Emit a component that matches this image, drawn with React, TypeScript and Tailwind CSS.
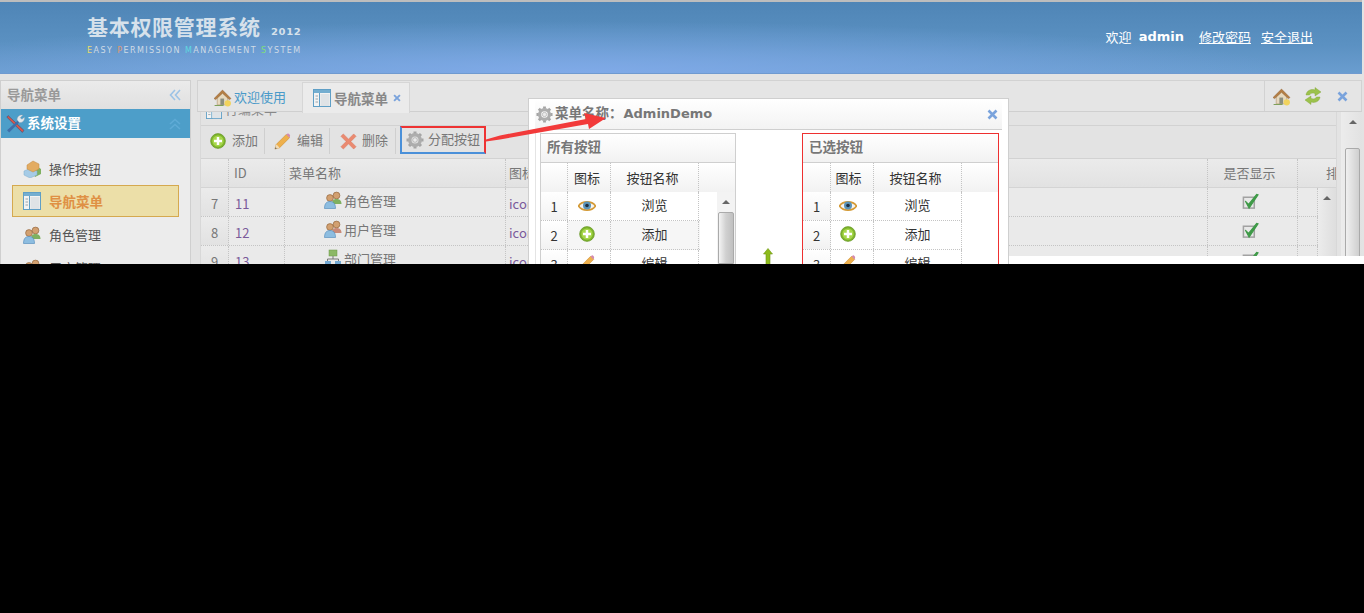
import type { ReactNode } from 'react'

const cjk = 'font-["Noto_Sans_CJK_SC","Liberation_Sans",sans-serif]'

const Svg = ({ className, children }: { className: string; children: ReactNode }) => (
  <svg viewBox="0 0 18 18" className={`shrink-0 ${className}`}>
    {children}
  </svg>
)

const HomeIcon = ({ className = 'w-[19px] h-[19px]' }: { className?: string }) => (
  <Svg className={className}>
    <path d="M4 9v7h10V9L9 4z" fill="#e6d9bf" stroke="#b9a27e" strokeWidth=".7" />
    <path d="M1 10 9 2l8 8-1.500 1L9 5l-6.500 6z" fill="#b57f45" stroke="#8e5f30" strokeWidth=".5" />
    <rect x="7" y="10" width="3.500" height="6" fill="#8b8f80" />
    <path d="M1 17h9v-1H2z" fill="#7fa05a" />
    <circle cx="14" cy="14.500" r="3" fill="#f1d35d" />
  </Svg>
)

const LayoutIcon = ({ className = 'w-[18px] h-[18px]' }: { className?: string }) => (
  <Svg className={className}>
    <rect x=".5" y=".5" width="17" height="17" fill="#f3f3f3" stroke="#5f9fc6" />
    <rect x="1" y="1" width="16" height="3" fill="#74aed0" />
    <path d="M6.500 4v13" stroke="#5f9fc6" />
    <path d="M2.500 7h2.500M2.500 10h2.500M2.500 13h2.500" stroke="#9aa4ab" />
    <rect x="7.500" y="5" width="9" height="12" fill="#dfe3e6" />
  </Svg>
)

const PlusIcon = ({ className = 'w-4 h-4' }: { className?: string }) => (
  <Svg className={className}>
    <circle cx="9" cy="9" r="8.300" fill="#7fb52d" stroke="#5d8f1d" strokeWidth=".7" />
    <circle cx="9" cy="9" r="6.300" fill="#a6d64a" />
    <path d="M9 4.500v9M4.500 9h9" stroke="#fff" strokeWidth="2.800" />
  </Svg>
)

const PencilIcon = ({ className = 'w-[17px] h-[17px]' }: { className?: string }) => (
  <Svg className={className}>
    <path d="M1 17l1.500-5L13 1.500l3.500 3.500L6 15.500z" fill="#eeb04c" stroke="#c98a2d" strokeWidth=".6" />
    <path d="M13 1.500 14.500.5c1-.5 3 1.500 2.500 2.800L16.500 5z" fill="#d48ab0" />
    <path d="M1 17l1.500-5 3.500 3.500z" fill="#f1dcb8" />
    <path d="M1 17l.6-2 1.400 1.400z" fill="#555" />
  </Svg>
)

const CrossIcon = ({ className = 'w-[17px] h-[17px]' }: { className?: string }) => (
  <Svg className={className}>
    <path d="M3.500 1 9 6.500 14.500 1 17 3.500 11.500 9l5.500 5.500-2.500 2.500L9 11.500 3.500 17 1 14.500 6.500 9 1 3.500z" fill="#ea8a70" stroke="#d96f55" strokeWidth=".5" />
  </Svg>
)

const GearIcon = ({ className = 'w-[18px] h-[18px]' }: { className?: string }) => (
  <Svg className={className}>
    <path d="M9 3v-2.500M9 17.500V15M3 9H.5M17.500 9H15M4.800 4.800 3 3M15 15l-1.800-1.800M13.200 4.800 15 3M3 15l1.800-1.800" stroke="#a5a5a5" strokeWidth="3" />
    <circle cx="9" cy="9" r="5.200" fill="none" stroke="#adadad" strokeWidth="3.400" />
    <circle cx="9" cy="9" r="2.300" fill="#eaeaea" stroke="#8f8f8f" strokeWidth=".5" />
  </Svg>
)

const EyeIcon = () => (
  <Svg className="w-[18px] h-[18px]">
    <path d="M.5 9C4 3.500 14 3.500 17.500 9 14 14.500 4 14.500.5 9z" fill="#f4f4f4" stroke="#d49a35" strokeWidth="1.700" />
    <circle cx="9" cy="8.500" r="4" fill="#5b93b8" />
    <circle cx="9" cy="8.500" r="1.800" fill="#1f2f3f" />
  </Svg>
)

const UsersIcon = ({ tone = '#7fb060' }: { tone?: string }) => (
  <Svg className="w-[18px] h-[18px]">
    <circle cx="12.500" cy="4.500" r="3.400" fill="#d2a070" stroke="#8a5c34" strokeWidth=".6" />
    <path d="M8 13c0-4 2-5 4.500-5S17.500 9 17.500 13z" fill={tone} />
    <circle cx="6" cy="7" r="3.400" fill="#d2a070" stroke="#8a5c34" strokeWidth=".6" />
    <path d="M.5 17.500c0-5 2-7 5.500-7s5.500 2 5.500 7z" fill="#8dbde0" stroke="#4c86b8" strokeWidth=".6" />
  </Svg>
)

const OrgIcon = () => (
  <Svg className="w-[18px] h-[18px]">
    <rect x="5" y="1" width="8" height="6" fill="#8cb866" stroke="#6b9848" strokeWidth=".5" />
    <path d="M9 7v3M3.500 12v-2h11v2" stroke="#777" fill="none" />
    <rect x="1" y="12" width="6" height="5" fill="#72a8d2" />
    <rect x="11" y="12" width="6" height="5" fill="#72a8d2" />
  </Svg>
)

const BoxIcon = () => (
  <Svg className="w-[18px] h-[18px]">
    <path d="M9 10l6-3 3 2v5l-6 3z" fill="#7fb060" />
    <path d="M1 11l7-3 6 3v4l-7 3-6-3z" fill="#a5cbe6" stroke="#7eaccd" strokeWidth=".5" />
    <path d="M4 5l6-4 6 3v5l-6 3-6-3z" fill="#e3ac62" stroke="#c08a45" strokeWidth=".5" />
  </Svg>
)

const ToolsIcon = () => (
  <Svg className="w-[19px] h-[19px]">
    <path d="M2 1.500 17 15.500l-1.500 2L.8 3z" fill="#d8564b" stroke="#2f4d7a" strokeWidth=".5" />
    <path d="M1 15.500 11 6.500l1.500 1.500L3 17.500z" fill="#3f6ea8" />
    <path d="M10.500 5.500C10.500 2.500 13 .5 16 1l-2.500 2.500 1.500 1.500L17.500 3c.5 3-2 5.500-5 5z" fill="#e4e8ec" stroke="#8fa0ae" strokeWidth=".4" />
  </Svg>
)

const CheckIcon = () => (
  <Svg className="w-[17px] h-[17px]">
    <rect x="1.500" y="4.500" width="11.500" height="11.500" fill="#e8e8e8" stroke="#a2a2a2" strokeWidth="1.600" />
    <path d="M3.500 8.500l3.500 3.500L15.500 1.500l1.500.5L7.500 16z" fill="#3f9a48" stroke="#3f9a48" strokeWidth="1.200" />
  </Svg>
)

const RefreshIcon = () => (
  <Svg className="w-[18px] h-[18px]">
    <path d="M2 8c.5-4 4.500-6.500 9-5V.5l6 4.500-6 4V6.500C8 5.500 6 6.500 5.500 8z" fill="#9cc24c" stroke="#7da234" strokeWidth=".4" />
    <path d="M16 10c-.5 4-4.500 6.500-9 5v2.500L1 13l6-4v2.500c3 1 5 0 5.500-1.500z" fill="#9cc24c" stroke="#7da234" strokeWidth=".4" />
  </Svg>
)

const CloseX = ({ className = 'w-[11px] h-[11px]' }: { className?: string }) => (
  <svg viewBox="0 0 11 11" className={`shrink-0 ${className}`}>
    <path d="M1.500 1.500l8 8M9.500 1.500l-8 8" stroke="#7aa3dc" strokeWidth="2.600" />
  </svg>
)

const DoubleChevron = ({ className, color }: { className: string; color: string }) => (
  <svg viewBox="0 0 12 12" className={`shrink-0 ${className}`} fill="none" stroke={color} strokeWidth="1.600">
    <path d="M6 1 1.500 6 6 11M11 1 6.500 6 11 11" />
  </svg>
)

const ScrollUp = () => <div className="w-0 h-0 border-x-[4px] border-x-transparent border-b-[4px] border-b-[#666]" />

const ToolButton = ({ icon, label, gap = 'gap-[6px]' }: { icon: ReactNode; label: string; gap?: string }) => (
  <div className={`flex items-center ${gap} text-[13px] text-[#777]`}>
    {icon}
    <span className="-mt-[2px]">{label}</span>
  </div>
)

const ToolSep = () => <div className="w-px h-[26px] bg-[#cfcfcf]" />

const SideItem = ({ icon, label, active }: { icon: ReactNode; label: string; active?: boolean }) => (
  <div
    className={
      active
        ? 'flex items-center h-[32px] -mt-px mb-px mx-[11px] pl-[10px] gap-[8px] bg-[#ecdfa8] border border-[#d5a94f] text-[#df9044] font-bold text-[13.5px]'
        : 'flex items-center h-[32px] mx-[11px] pl-[11px] gap-[8px] text-[#555] text-[13px]'
    }
  >
    {icon}
    <span>{label}</span>
  </div>
)

const mainRows = [
  { no: 7, id: 11, name: '角色管理', icon: <UsersIcon /> },
  { no: 8, id: 12, name: '用户管理', icon: <UsersIcon tone="#c98a78" /> },
  { no: 9, id: 13, name: '部门管理', icon: <OrgIcon /> },
]

const dialogRows = [
  { no: 1, icon: <EyeIcon />, name: '浏览' },
  { no: 2, icon: <PlusIcon className="w-4 h-4" />, name: '添加' },
  { no: 3, icon: <PencilIcon className="w-4 h-4" />, name: '编辑' },
]

const dotR = 'border-r border-dotted border-r-[#c4c4c4]'
const dotB = 'border-b border-dotted border-b-[#c4c4c4]'

const ButtonGrid = ({ title, selected }: { title: string; selected?: boolean }) => {
  const noCol = selected ? 'w-[28px]' : 'w-[27px]'
  return (
    <div className={`${selected ? 'w-[197px] border-[#ee3030]' : 'w-[196px] border-[#cfcfcf]'} h-[140px] shrink-0 border border-b-0`}>
      <div className="h-[29px] flex items-center px-[6px] pb-[3px] font-bold text-[13.5px] text-[#777] bg-gradient-to-b from-white to-[#f2f2f2] border-b border-b-[#cfcfcf]">
        {title}
      </div>
      <div className="flex h-[29px] text-[13px] text-[#333] bg-gradient-to-b from-white to-[#f2f2f2]">
        <div className={`${noCol} ${dotR}`} />
        <div className={`w-[43px] ${selected ? 'pr-[7px]' : 'pr-[4px]'} flex items-center justify-center ${dotR}`}>图标</div>
        <div className={`w-[88px] pr-[4px] flex items-center justify-center ${dotR}`}>按钮名称</div>
      </div>
      <div className="flex">
        <div className="w-[159px]">
          {dialogRows.map((r) => (
            <div key={r.no} className={`flex h-[29px] text-[13px] text-[#333] ${dotB} ${!selected && r.no === 2 ? 'bg-[#f6f6f6]' : ''}`}>
              <div className={`${noCol} pt-[5px] text-center bg-gradient-to-b from-white to-[#f2f2f2] ${dotR}`}>{r.no}</div>
              <div className={`w-[43px] ${selected ? 'pr-[8px]' : 'pr-[5px]'} flex justify-center pt-[5px] ${dotR}`}>{r.icon}</div>
              <div className={`w-[88px] text-center pt-[3px] ${dotR}`}>{r.name}</div>
            </div>
          ))}
        </div>
        {!selected && (
          <div className="ml-[17px] w-[18px] h-[72px] flex flex-col items-center bg-[#f3f3f3]">
            <div className="h-[20px] flex items-center">
              <ScrollUp />
            </div>
            <div className="w-[16px] flex-1 rounded-t-[2px] border border-[#aaa] bg-gradient-to-r from-[#f4f4f4] via-[#d0d0d0] to-[#c0c0c0]" />
          </div>
        )}
      </div>
    </div>
  )
}

const Dialog = () => (
  <div className="absolute left-[528px] top-[98px] w-[481px] h-[170px] bg-white border border-[#cfcfcf] px-[6px]">
    <div className="h-[31px] flex items-center bg-gradient-to-b from-white to-[#f3f3f3] border-b border-b-[#cfcfcf]">
      <GearIcon className="w-[17px] h-[17px] ml-px" />
      <span className={`ml-[2px] -mt-[2px] text-[13px] font-bold text-[#777] font-["DejaVu_Sans","Noto_Sans_CJK_SC",sans-serif]`}>
        <span className={`${cjk} text-[13.5px] mr-px`}>菜单名称：</span>AdminDemo
      </span>
      <CloseX className="ml-auto mr-[4px] w-[11px] h-[11px]" />
    </div>
    <div className="flex pt-[3px] pl-[4px] border-l border-l-[#e4e4e4]">
      <ButtonGrid title="所有按钮" />
      <div className="w-[66px] pr-[3px] shrink-0 flex justify-center pt-[115px]">
        <svg viewBox="0 0 10 20" className="w-[10px] h-[20px] shrink-0">
          <path d="M5 .5 9.500 6H7v14H3V6H.5z" fill="#8dbb1c" stroke="#6f9614" strokeWidth=".6" />
        </svg>
      </div>
      <ButtonGrid title="已选按钮" selected />
    </div>
  </div>
)

const MainTable = () => (
  <div className="flex-1 flex flex-col text-[13px] text-[#777] min-w-0">
    <div className="flex h-[29px] border-b border-b-[#d4d4d4] bg-gradient-to-b from-[#ebebeb] to-[#e2e2e2]">
      <div className={`w-[28px] ${dotR}`} />
      <div className={`w-[56px] pl-[5px] flex items-center ${dotR}`}>ID</div>
      <div className={`w-[221px] pl-[4px] flex items-center ${dotR}`}>菜单名称</div>
      <div className={`w-[702px] pl-[3px] flex items-center ${dotR}`}>图标</div>
      <div className={`w-[90px] pr-[6px] flex items-center justify-center ${dotR}`}>是否显示</div>
      <div className="flex-1 pl-[28px] flex items-center overflow-hidden whitespace-nowrap">排序</div>
    </div>
    <div className="flex">
      <div className="w-[1119px]">
        {mainRows.map((r) => (
          <div key={r.no} className={`flex h-[29px] bg-[#eaeaea] ${dotB}`}>
            <div className={`w-[28px] pt-[6px] text-center bg-gradient-to-b from-[#ebebeb] to-[#e2e2e2] ${dotR}`}>{r.no}</div>
            <div className={`w-[56px] pl-[6px] pt-[6px] text-[#7a5a9a] ${dotR}`}>{r.id}</div>
            <div className={`w-[221px] pl-[39px] pt-[3px] flex gap-[2px] ${dotR}`}>
              {r.icon}
              <span>{r.name}</span>
            </div>
            <div className={`w-[702px] pl-[3px] pt-[6px] text-[#7a5a9a] ${dotR}`}>icon-role</div>
            <div className={`w-[90px] pr-[4px] flex justify-center pt-[5px] ${dotR}`}>
              <CheckIcon />
            </div>
            <div className={`flex-1 ${dotR}`} />
          </div>
        ))}
      </div>
      <div className="w-[18px] h-[90px] flex flex-col items-center bg-gradient-to-r from-[#ececec] to-[#dedede]">
        <div className="h-[19px] flex items-center">
          <ScrollUp />
        </div>
      </div>
    </div>
  </div>
)

export default function App() {
  return (
    <div className={`relative w-[1364px] h-[613px] bg-black overflow-hidden ${cjk}`}>
      <div className="relative h-[264px] overflow-hidden bg-[#e3e3e3] pr-[2px]">
        {/* top banner */}
        <div className="h-[74px] border-t-2 border-t-[#bdbdbd] border-b border-b-[#6f9ad0] flex bg-[radial-gradient(ellipse_720px_52px_at_42%_100%,#80aae8_0%,#80aae800_100%),linear-gradient(180deg,#4f85b6_0%,#5b91c2_60%,#6a9dd0_100%)]">
          <div className="ml-[87px] pt-[10px] w-[300px]">
            <div className="flex items-end text-[#d6e1eb]">
              <span className="text-[21px] leading-[29px] font-bold tracking-[0.7px] whitespace-nowrap">基本权限管理系统</span>
              <span className={`ml-[10px] mb-[3px] text-[8px] leading-[11px] font-bold tracking-[0.5px] font-["DejaVu_Sans",sans-serif] scale-x-125 origin-left`}>2012</span>
            </div>
            <div className={`mt-[5px] text-[8px] leading-[10px] text-[#cfdbe6] tracking-[1.43px] whitespace-nowrap font-["DejaVu_Sans",sans-serif]`}>
              <span className="text-[#e4dc6a]">E</span>ASY <span className="text-[#e09a70]">P</span>ERMISSION <span className="text-[#5fd8e0]">M</span>ANAGEMENT <span className="text-[#7fe07a]">S</span>YSTEM
            </div>
          </div>
          <div className="ml-auto mr-[49px] pt-[24px] flex items-center h-[46px] text-[13px] text-white">
            <span>欢迎</span>
            <span className={`ml-[7px] font-bold font-["DejaVu_Sans",sans-serif]`}>admin</span>
            <a className="ml-[15px] underline">修改密码</a>
            <a className="ml-[10px] underline">安全退出</a>
          </div>
        </div>

        <div className="flex pt-[6px]">
          {/* left nav */}
          <div className="w-[191px] h-[190px] shrink-0 border border-[#cfcfcf] bg-[#ececec]">
            <div className="h-[28px] flex items-center pl-[6px] pr-[9px] font-bold text-[13.5px] text-[#999] bg-gradient-to-b from-[#ebebeb] to-[#e0e0e0]">
              <span className="-mt-[2px]">导航菜单</span>
              <DoubleChevron className="ml-auto w-[12px] h-[12px]" color="#9cc3e6" />
            </div>
            <div className="h-[29px] flex items-center pl-[5px] pr-[9px] gap-[2px] bg-[#4d9ec9] text-white font-bold text-[13.5px]">
              <ToolsIcon />
              <span className="-mt-[2px]">系统设置</span>
              <DoubleChevron className="ml-auto w-[12px] h-[12px] rotate-90" color="#5fabd6" />
            </div>
            <div className="pt-[15px] flex flex-col gap-[1px]">
              <SideItem icon={<BoxIcon />} label="操作按钮" />
              <SideItem icon={<LayoutIcon />} label="导航菜单" active />
              <SideItem icon={<UsersIcon />} label="角色管理" />
              <SideItem icon={<UsersIcon tone="#c98a78" />} label="用户管理" />
            </div>
          </div>

          {/* tabs and grid */}
          <div className="ml-[6px] w-[1165px] shrink-0">
            <div className="h-[32px] flex border border-[#d2d2d2] border-b-[#cfcfcf] bg-[#e5e5e5]">
              <div className="flex items-center pl-[15px] pt-[3px] gap-[2px] text-[13px] text-[#4a9ac9]">
                <HomeIcon />
                <span className="-mt-[1px]">欢迎使用</span>
              </div>
              <div className="ml-[16px] mt-px h-[31px] w-[108px] flex items-center pl-[10px] gap-[3px] bg-[#ebebeb] border border-[#d6d6d6] border-b-0 text-[13.5px] font-bold text-[#888]">
                <LayoutIcon />
                <span>导航菜单</span>
                <CloseX className="ml-[2px] w-[8px] h-[8px]" />
              </div>
              <div className="ml-auto w-[97px] flex items-center gap-[13px] pl-[7px] border-l border-l-[#d2d2d2]">
                <HomeIcon />
                <RefreshIcon />
                <CloseX className="ml-[2px] w-[11px] h-[11px]" />
              </div>
            </div>

            <div className="flex">
              <div className="flex-1 pl-[3px] min-w-0">
                <div className="w-[1137px] border-x border-x-[#d8d8d8]">
                  <div className="h-[14px] overflow-hidden border-b border-b-[#d2d2d2]">
                    <div className="flex items-center gap-[3px] pl-[5px] -mt-[9px] text-[13px] text-[#888]">
                      <LayoutIcon className="w-[16px] h-[16px]" />
                      <span className="-mt-[5px]">行编菜单</span>
                    </div>
                  </div>
                  <div className="h-[33px] flex items-center pl-[9px] pb-[2px] border-b border-b-[#d2d2d2]">
                    <ToolButton icon={<PlusIcon />} label="添加" />
                    <div className="ml-[6px] mr-[9px]"><ToolSep /></div>
                    <ToolButton icon={<PencilIcon />} label="编辑" />
                    <div className="ml-[6px] mr-[10px]"><ToolSep /></div>
                    <ToolButton icon={<CrossIcon />} label="删除" gap="gap-[5px]" />
                    <div className="ml-[7px] mr-[4px]"><ToolSep /></div>
                    <div className="w-[86px] h-[28px] -mt-[3px] flex items-center gap-[4px] pl-[4px] border-2 border-[#ee3333] border-l-[#4a90d9] border-b-[#4a90d9] text-[13px] text-[#777]">
                      <GearIcon />
                      <span className="-mt-[1px]">分配按钮</span>
                    </div>
                  </div>
                  <MainTable />
                </div>
              </div>
              <div className="w-[21px] h-[160px] pl-[2px] flex flex-col items-center bg-gradient-to-r from-[#ececec] to-[#e2e2e2]">
                <div className="h-[20px] flex items-center"><ScrollUp /></div>
                <div className="mt-[16px] w-[15px] flex-1 rounded-t-[2px] border border-[#aaa] bg-gradient-to-r from-[#f0f0f0] to-[#cfcfcf]" />
              </div>
            </div>
          </div>
        </div>

        {/* strip below the mask */}
        <div className="absolute right-0 top-[256px] w-[360px] h-[8px] bg-white" />

        <Dialog />

        {/* hand-drawn annotation arrow */}
        <svg viewBox="0 0 1364 264" className="absolute inset-0 w-[1364px] h-[264px] pointer-events-none">
          <path d="M486 139.500 500 135.500 586 119 584 113 606 118 589 129 588 124 500 139.500 486 141.500z" fill="#f23a3a" />
        </svg>
      </div>
    </div>
  )
}
